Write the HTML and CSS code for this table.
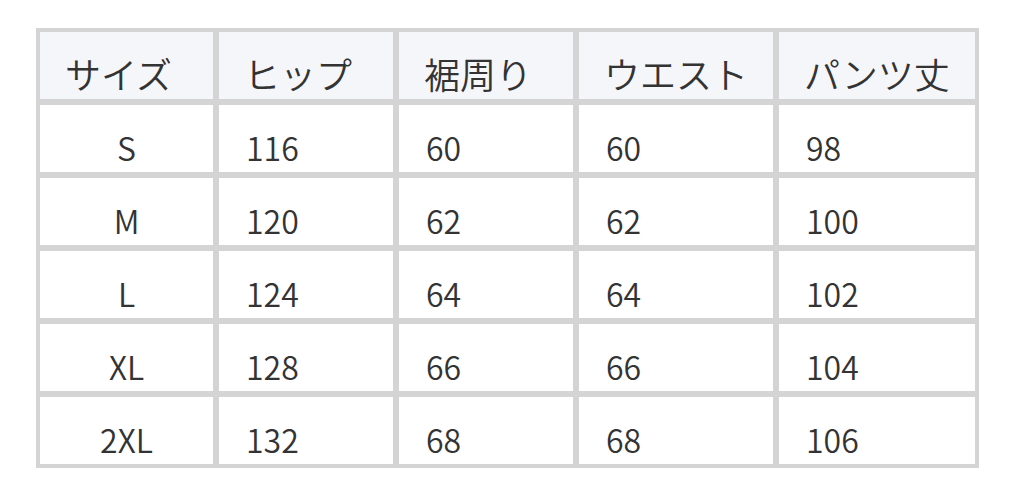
FILE: index.html
```html
<!DOCTYPE html>
<html lang="ja">
<head>
<meta charset="utf-8">
<link rel="stylesheet" href="styles.css">
</head>
<body>
<table class="size-table">
  <colgroup>
    <col class="c1"><col class="c2"><col class="c3"><col class="c4"><col class="c5">
  </colgroup>
  <thead>
    <tr><th>サイズ</th><th>ヒップ</th><th>裾周り</th><th>ウエスト</th><th>パンツ丈</th></tr>
  </thead>
  <tbody>
    <tr><td class="sz">S</td><td>116</td><td>60</td><td>60</td><td>98</td></tr>
    <tr><td class="sz">M</td><td>120</td><td>62</td><td>62</td><td>100</td></tr>
    <tr><td class="sz">L</td><td>124</td><td>64</td><td>64</td><td>102</td></tr>
    <tr><td class="sz">XL</td><td>128</td><td>66</td><td>66</td><td>104</td></tr>
    <tr><td class="sz">2XL</td><td>132</td><td>68</td><td>68</td><td>106</td></tr>
  </tbody>
</table>
</body>
</html>
```
FILE: styles.css
```css
html, body { margin: 0; background: #ffffff; }
body {
  padding: 28px 0 0 36px;
  font-family: "Noto Sans CJK JP", "Noto Sans", sans-serif;
  color: #333333;
}
.size-table {
  table-layout: fixed;
  width: 943px;
  border: 1px solid #d4d4d4;
  border-spacing: 0;
  border-collapse: separate;
}
.c1 { width: 179px; }
.c2 { width: 180px; }
.c3 { width: 180px; }
.c4 { width: 200px; }
.c5 { width: 202px; }
.size-table th, .size-table td {
  border: 3px solid #d4d4d4;
  box-sizing: content-box;
  padding: 0 0 0 27px;
  font-weight: 350;
  text-align: left;
  white-space: nowrap;
}
.size-table th {
  background: #f5f6fa;
  font-size: 36px;
  line-height: 36px;
  height: 36px;
  padding-top: 23px;
  padding-bottom: 8px;
  padding-left: 25px;
}
.size-table td {
  background: #ffffff;
  font-size: 32px;
  line-height: 32px;
  height: 32px;
  padding-top: 26px;
  padding-bottom: 9px;
}
.size-table td.sz {
  text-align: center;
  padding-left: 0;
}
```
